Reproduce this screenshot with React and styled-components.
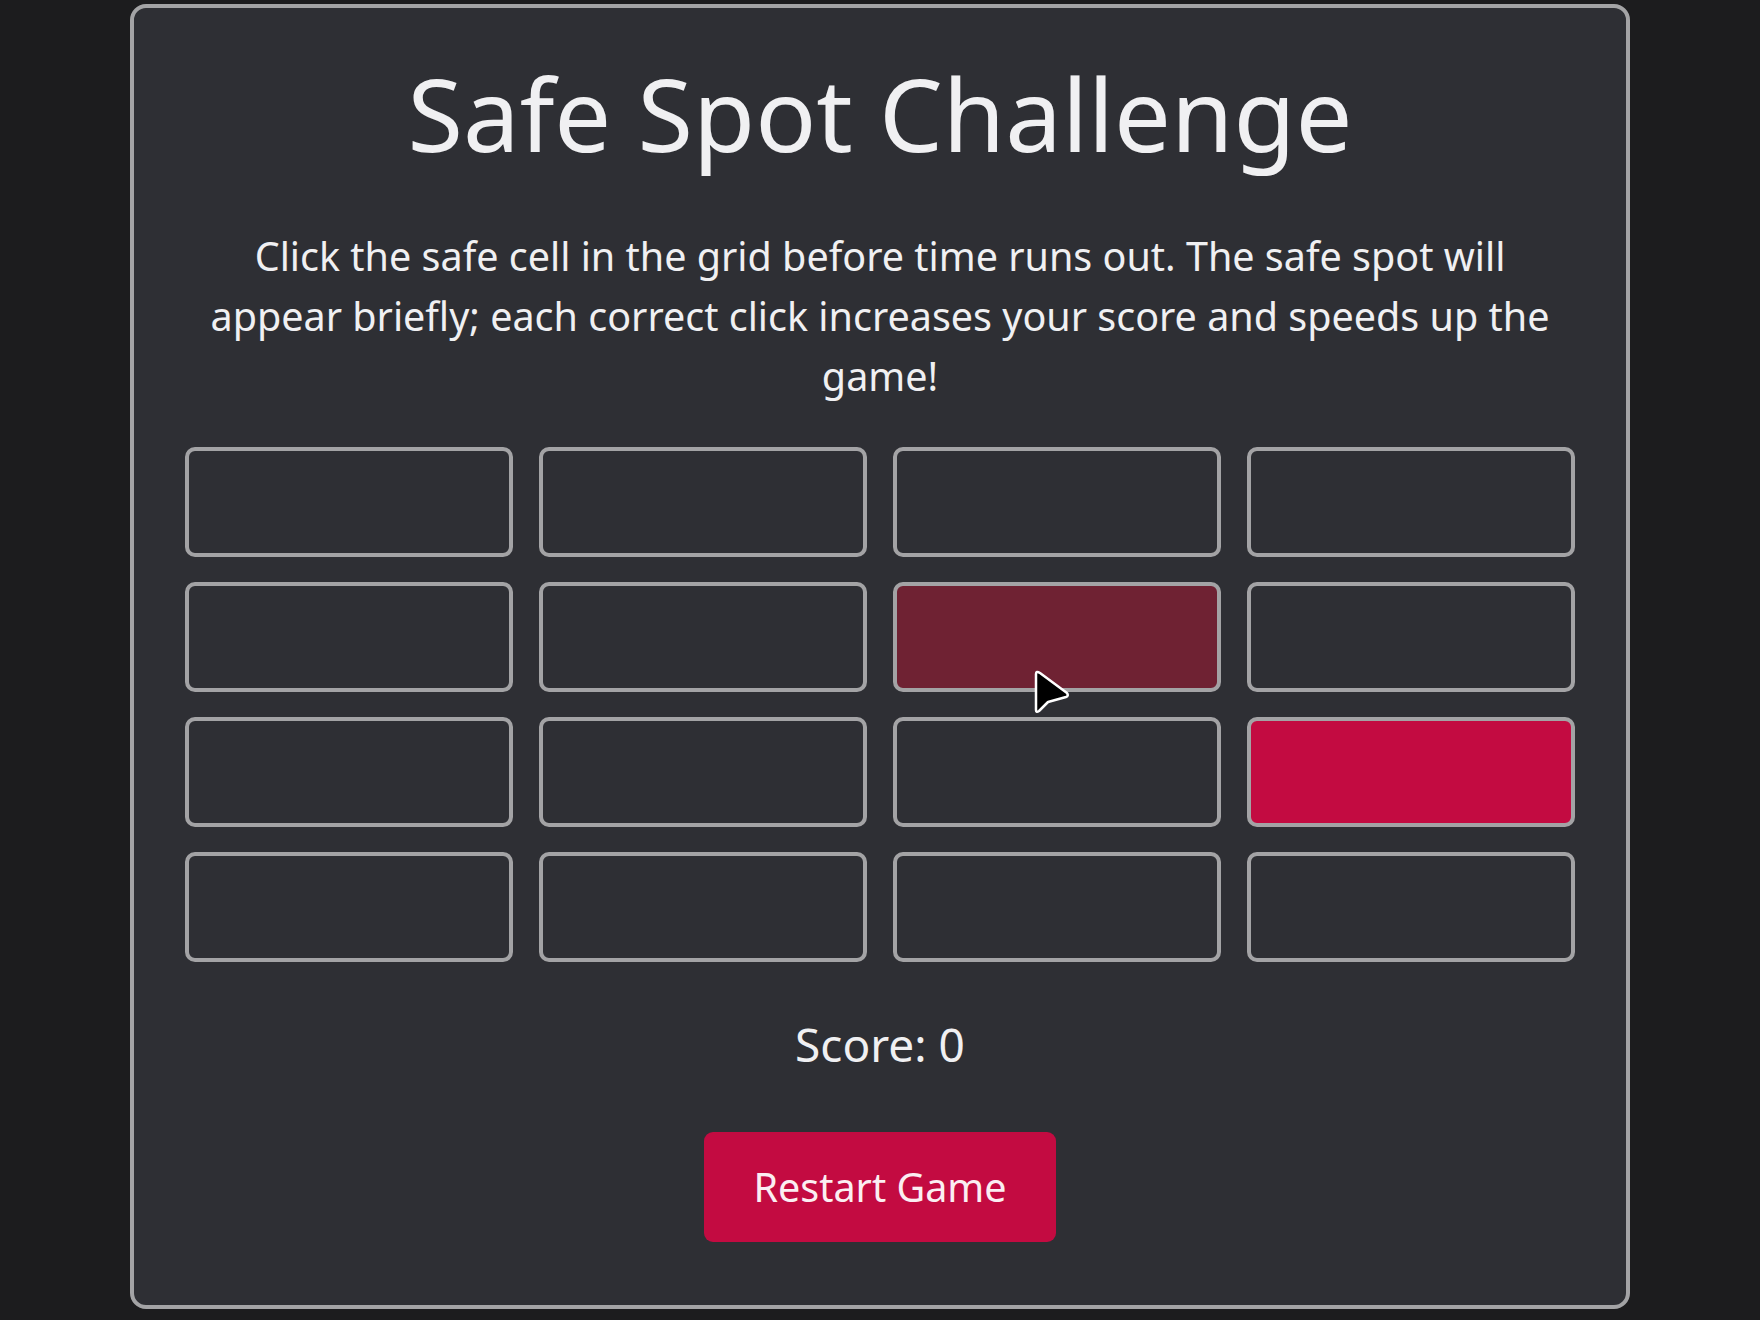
import React from "react";
import styled, { createGlobalStyle } from "styled-components";

const Global = createGlobalStyle`
  html, body {
    margin: 0;
    padding: 0;
    background: #1c1c1e;
  }
  body {
    font-family: "Noto Sans", "Open Sans", sans-serif;
    color: #f0f0f2;
  }
`;

const Page = styled.div`
  position: relative;
  padding-top: 4px;
  min-height: 1320px;
  box-sizing: border-box;
`;

const Card = styled.main`
  box-sizing: border-box;
  width: 1500px;
  margin: 0 auto;
  height: 1305px;
  background: #2e2f34;
  border: 4px solid #a3a3a5;
  border-radius: 16px;
  padding: 45px 51px 0;
  display: flex;
  flex-direction: column;
  align-items: center;
`;

const Title = styled.h1`
  margin: 0;
  font-size: 101px;
  font-weight: 400;
  line-height: 121px;
  letter-spacing: 0;
  color: #f0f0f2;
`;

const Description = styled.p`
  margin: 52px 0 0;
  font-size: 39.5px;
  line-height: 60px;
  text-align: center;
  max-width: 1350px;
  color: #f0f0f2;
`;

const Grid = styled.div`
  margin-top: 41px;
  width: 100%;
  display: grid;
  grid-template-columns: repeat(4, 1fr);
  column-gap: 26px;
  row-gap: 25px;
`;

const Cell = styled.div`
  box-sizing: border-box;
  height: 110px;
  border: 4px solid #a3a3a5;
  border-radius: 10px;
  background: ${(p) =>
    p.$state === "safe" ? "#c30b41" : p.$state === "fading" ? "#6f2233" : "#2e2f34"};
`;

const Score = styled.div`
  margin-top: 55px;
  font-size: 46px;
  line-height: 55px;
  color: #f0f0f2;
`;

const RestartButton = styled.button`
  margin-top: 60px;
  width: 352px;
  height: 110px;
  border: none;
  border-radius: 9px;
  background: #c30b41;
  color: #fbeef2;
  font-family: "Noto Sans", "Open Sans", sans-serif;
  font-size: 39.5px;
  cursor: pointer;
`;

const Pointer = styled.svg`
  position: absolute;
  left: 1031px;
  top: 670px;
  width: 42px;
  height: 48px;
  pointer-events: none;
`;

const cells = Array.from({ length: 16 }, (_, i) =>
  i === 6 ? "fading" : i === 11 ? "safe" : "idle"
);

export default function App() {
  return (
    <>
      <Global />
      <Page>
        <Card>
          <Title>Safe Spot Challenge</Title>
          <Description>
            Click the safe cell in the grid before time runs out. The safe spot will appear
            briefly; each correct click increases your score and speeds up the game!
          </Description>
          <Grid>
            {cells.map((s, i) => (
              <Cell key={i} $state={s} />
            ))}
          </Grid>
          <Score>Score: 0</Score>
          <RestartButton>Restart Game</RestartButton>
        </Card>
        <Pointer viewBox="0 0 42 48">
          <path
            d="M5 4 L5 40 Q5 43 8 41 L17 32 L35 27 Q38 26 36 23 L9 3 Q5 0.5 5 4 Z"
            fill="#000"
            stroke="#fff"
            strokeWidth="2.5"
            strokeLinejoin="round"
          />
        </Pointer>
      </Page>
    </>
  );
}
